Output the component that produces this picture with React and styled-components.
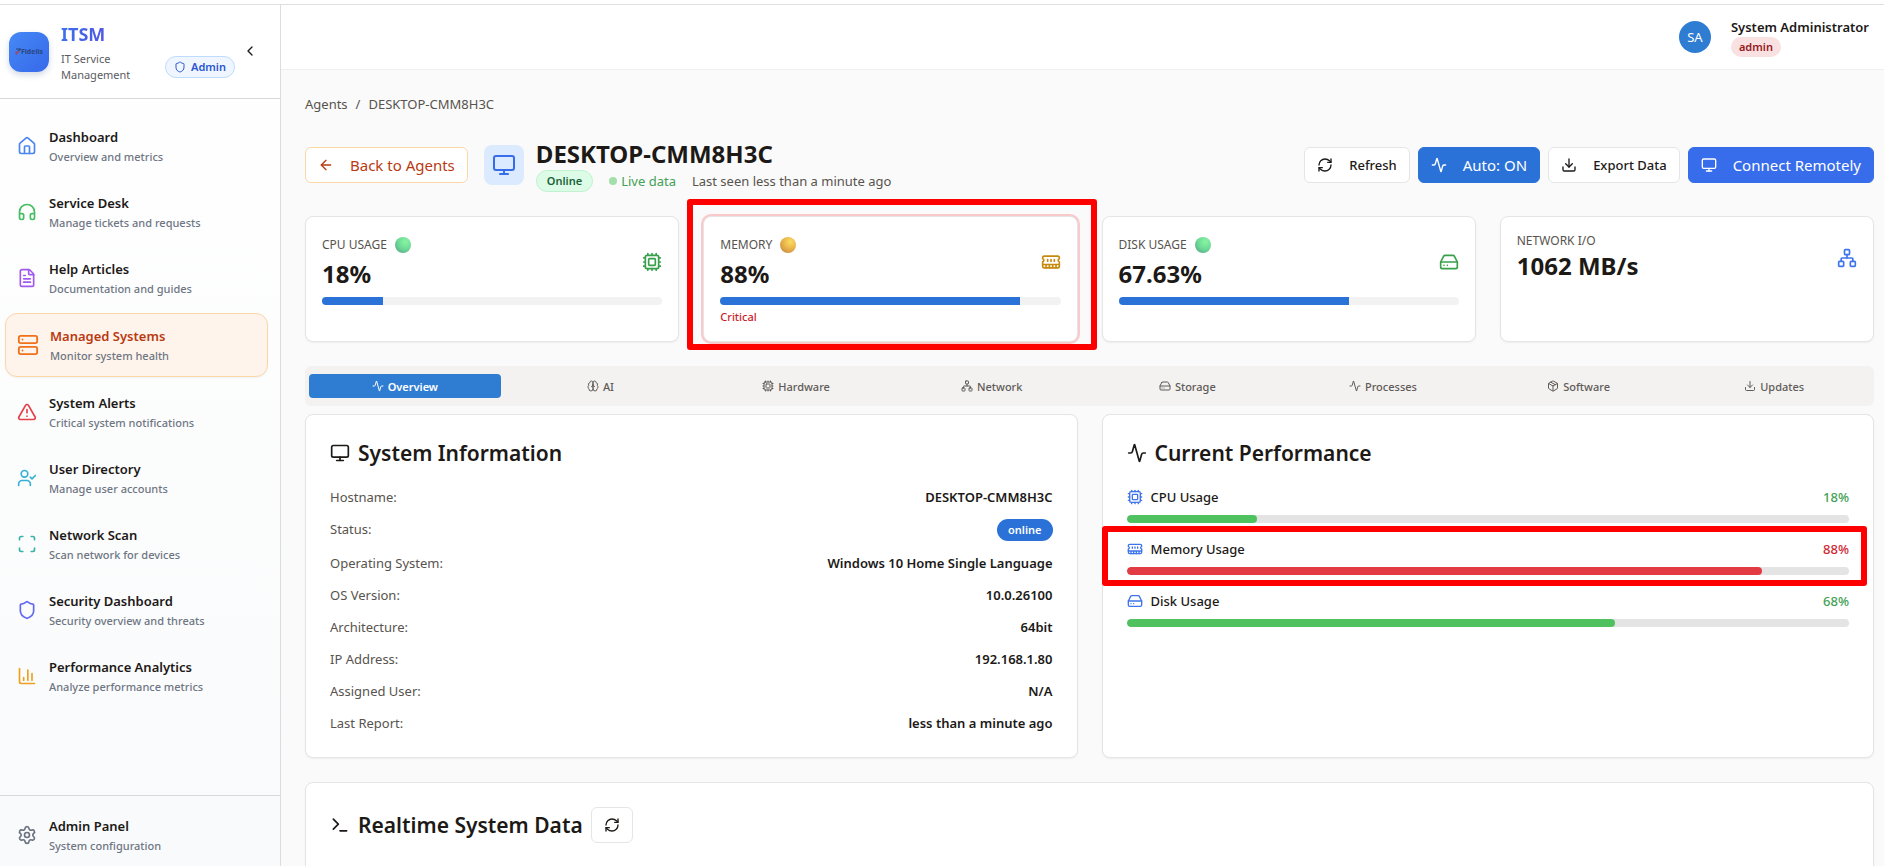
import React from "react";
import styled, { createGlobalStyle, css } from "styled-components";
import {
  House, Headphones, FileText, Server, TriangleAlert, UserCheck, Scan, Shield,
  ChartColumn, Settings, ChevronLeft, ArrowLeft, Monitor, RefreshCw, Activity,
  Download, Cpu, HardDrive, Network, Package, Terminal,
} from "lucide-react";

const GlobalStyle = createGlobalStyle`
  *, *::before, *::after { box-sizing: border-box; }
  body {
    margin: 0;
    background: #fff;
    color: #1c1917;
    font-family: "Noto Sans", "Open Sans", sans-serif;
    font-size: 13px;
    line-height: 20px;
  }
  h1, h2, p, dl, dd, ul { margin: 0; padding: 0; }
  button { font-family: inherit; cursor: pointer; }
  a { color: inherit; text-decoration: none; }
  svg { flex: none; display: block; }
`;

const Shell = styled.div`
  height: 100vh;
  padding-top: 4px;
  display: flex;
  overflow: hidden;
`;

/* ---------- sidebar ---------- */

const Sidebar = styled.aside`
  width: 281px;
  flex: none;
  display: flex;
  flex-direction: column;
  border-top: 1px solid #dfdfe2;
  border-right: 1px solid #dcdcde;
  background: linear-gradient(#fff, #f9fafb);
`;

const Brand = styled.div`
  height: 94px;
  flex: none;
  display: flex;
  align-items: center;
  padding: 0 22px 0 9px;
  border-bottom: 1px solid #d9d9dc;
  background: #fff;
`;

const Logo = styled.div`
  width: 40px;
  height: 40px;
  margin: 0 12px 0 0;
  display: flex;
  align-items: center;
  justify-content: center;
  border-radius: 12px;
  background: linear-gradient(135deg, #4689f5, #3668ea);
  box-shadow: 0 3px 6px rgba(30, 60, 120, 0.2);
  color: #28477f;
  font-size: 7px;
  font-weight: 700;
  line-height: 8px;
`;

const BrandText = styled.div`
  width: 104px;
`;

const BrandName = styled.p`
  width: max-content;
  font-size: 18px;
  font-weight: 700;
  line-height: 26px;
  background: linear-gradient(90deg, #3b6fee, #5257e2);
  background-clip: text;
  color: transparent;
`;

const BrandSub = styled.p`
  width: 80px;
  padding-top: 4px;
  font-size: 11px;
  line-height: 16px;
  color: #5b5b5f;
`;

const AdminBadge = styled.span`
  height: 22px;
  width: 70px;
  margin-top: 30px;
  display: inline-flex;
  align-items: center;
  justify-content: center;
  gap: 5px;
  border: 1px solid #bfdbfe;
  border-radius: 11px;
  background: #eff6ff;
  color: #2a57cf;
  font-size: 11px;
  font-weight: 600;
`;

const CollapseButton = styled.button`
  margin: 0 0 2px auto;
  padding: 0;
  border: 0;
  background: none;
  color: #1c1917;
`;

const Nav = styled.nav`
  flex: 1;
  display: flex;
  flex-direction: column;
  gap: 4px;
  padding: 16px 12px 0 5px;
`;

const NavLink = styled.a`
  display: flex;
  align-items: center;
  gap: 12px;
  padding: 12px;
  border-radius: 12px;

  svg { color: ${(p) => p.$color}; }

  ${(p) => p.$active && css`
    border: 1px solid #fbd7a8;
    background: #fff4eb;
    box-shadow: 0 1px 2px rgba(0, 0, 0, 0.05);
    svg { transform: scale(1.1); }
  `}
`;

const NavTitle = styled.span`
  display: block;
  margin-bottom: 2px;
  font-weight: 600;
  color: ${(p) => (p.$active ? "#b83a12" : "#1c1917")};
`;

const NavSub = styled.span`
  display: block;
  font-size: 11px;
  font-weight: 500;
  line-height: 16px;
  color: #6e7683;
`;

const SidebarFooter = styled.div`
  padding: 8px 12px 0 5px;
  border-top: 1px solid #d9d9dc;
  background: #f9fafc;
`;

/* ---------- main column ---------- */

const Main = styled.div`
  flex: 1;
  min-width: 0;
  display: flex;
  flex-direction: column;
  border-top: 1px solid #dfdfe2;
  background: #fafafa;
`;

const TopBar = styled.header`
  height: 65px;
  flex: none;
  display: flex;
  align-items: center;
  justify-content: flex-end;
  gap: 20px;
  padding: 0 15px 0 0;
  border-bottom: 1px solid #efefef;
  background: #fff;
`;

const Avatar = styled.span`
  width: 32px;
  height: 32px;
  margin-bottom: 1px;
  border-radius: 50%;
  background: #2f7dd3;
  color: #fff;
  line-height: 32px;
  text-align: center;
`;

const UserName = styled.p`
  font-weight: 600;
`;

const RoleBadge = styled.span`
  display: block;
  width: max-content;
  padding: 0 8px;
  border-radius: 10px;
  background: #fae1e1;
  color: #95191e;
  font-size: 11px;
  font-weight: 600;
`;

const Content = styled.main`
  display: flex;
  flex-direction: column;
  padding: 24px 10px 0 24px;
`;

const Breadcrumb = styled.nav`
  display: flex;
  gap: 8px;
  color: #57534e;
`;

const AgentHeader = styled.div`
  display: flex;
  align-items: center;
  gap: 16px;
  margin-top: 24px;
`;

const Button = styled.button`
  height: 36px;
  display: inline-flex;
  align-items: center;
  gap: 16px;
  padding: 0 12px;
  border: 1px solid #e5e5e5;
  border-radius: 6px;
  background: #fff;
  color: #1c1917;
  font-size: 13px;
  font-weight: 500;
  white-space: nowrap;

  ${(p) => p.$large && css`
    font-size: 15px;
    font-weight: 400;
  `}
  ${(p) => p.$tone === "back" && css`
    border-color: #fbd7a8;
    color: #b83a12;
  `}
  ${(p) => p.$tone === "primary" && css`
    border-color: #2a72d8;
    background: #2a72d8;
    color: #fff;
  `}
  ${(p) => p.$tone === "connect" && css`
    border-color: #376ceb;
    background: #376ceb;
    color: #fff;
  `}
`;

const AgentIcon = styled.span`
  width: 40px;
  height: 40px;
  display: flex;
  align-items: center;
  justify-content: center;
  border-radius: 8px;
  background: #dbeafe;
  color: #376ceb;
`;

const AgentTitle = styled.div`
  margin-left: -4px;
`;

const HostName = styled.h1`
  font-size: 24px;
  font-weight: 700;
  line-height: 32px;
`;

const StatusLine = styled.div`
  display: flex;
  align-items: center;
  gap: 16px;
  color: #57534e;
`;

const OnlineBadge = styled.span`
  padding: 0 10px;
  border: 1px solid #c1f2cf;
  border-radius: 11px;
  background: #dcfce7;
  color: #206238;
  font-size: 11px;
  font-weight: 600;
`;

const Live = styled.span`
  display: flex;
  align-items: center;
  gap: 4px;
  color: #43a055;

  &::before {
    content: "";
    width: 8px;
    height: 8px;
    border-radius: 50%;
    background: #a3dfab;
  }
`;

const Actions = styled.div`
  display: flex;
  gap: 8px;
  margin-left: auto;
`;

/* ---------- stat cards ---------- */

const StatGrid = styled.div`
  display: grid;
  grid-template-columns: repeat(4, 1fr);
  gap: 24px;
  margin-top: 24px;
`;

const StatCell = styled.div`
  position: relative;
  display: grid;
`;

const cardBase = css`
  border: 1px solid #e5e5e5;
  border-radius: 8px;
  background: #fff;
  box-shadow: 0 1px 2px rgba(0, 0, 0, 0.05);
`;

const StatCard = styled.section`
  ${cardBase}
  min-height: 126px;
  padding: 16px;
  ${(p) => p.$alert && css`box-shadow: 0 0 0 2px #f9c9cc;`}
`;

const StatTop = styled.div`
  display: flex;
  align-items: center;
  justify-content: space-between;
  svg { color: ${(p) => p.$color}; }
`;

const StatLabel = styled.p`
  display: flex;
  align-items: center;
  gap: 8px;
  font-size: 12px;
  line-height: ${(p) => (p.$dot ? "24px" : "16px")};
  font-weight: 400;
  color: #57534e;
`;

const dots = {
  green: "radial-gradient(circle at 65% 30%, #86f5a0, #6fdc97 45%, #4f9d84)",
  amber: "radial-gradient(circle at 65% 30%, #fbdc63, #e9b548 45%, #bf7c43)",
};

const HealthDot = styled.span`
  width: 16px;
  height: 16px;
  border-radius: 50%;
  background: ${(p) => dots[p.$tone]};
`;

const StatValue = styled.p`
  font-size: 24px;
  font-weight: 700;
  line-height: 34px;
`;

const Track = styled.div`
  height: 8px;
  margin-top: ${(p) => p.$gap}px;
  border-radius: 4px;
  background: ${(p) => p.$track};
  overflow: hidden;
`;

const Fill = styled.div`
  height: 100%;
  border-radius: ${(p) => (p.$round ? "4px" : "0")};
  background: ${(p) => p.$color};
`;

const Warning = styled.p`
  margin-top: 4px;
  font-size: 11px;
  font-weight: 500;
  line-height: 16px;
  color: #c81e2c;
`;

const Callout = styled.span`
  position: absolute;
  inset: ${(p) => p.$inset};
  border: 6px solid #fe0000;
  border-radius: 3px;
  pointer-events: none;
`;

/* ---------- tabs ---------- */

const Tabs = styled.div`
  display: grid;
  grid-template-columns: repeat(8, 1fr);
  gap: 4px;
  align-items: center;
  height: 40px;
  margin-top: 24px;
  padding: 0 4px;
  border-radius: 6px;
  background: #f3f2f1;
`;

const Tab = styled.button`
  height: 24px;
  display: flex;
  align-items: center;
  justify-content: center;
  gap: 4px;
  padding: 0;
  border: 0;
  border-radius: 4px;
  background: ${(p) => (p.$active ? "#2f7dd3" : "none")};
  color: ${(p) => (p.$active ? "#fff" : "#5f5b57")};
  font-size: 11px;
  font-weight: ${(p) => (p.$active ? 600 : 500)};
`;

/* ---------- detail panels ---------- */

const Panels = styled.div`
  display: grid;
  grid-template-columns: 1fr 1fr;
  gap: 24px;
  margin: 8px 0 24px;
`;

const Panel = styled.section`
  ${cardBase}
  min-width: 0;
  padding: 24px;
`;

const DataPanel = styled(Panel)`
  min-height: 180px;
`;

const PanelTitle = styled.h2`
  display: flex;
  align-items: center;
  gap: 8px;
  margin-bottom: ${(p) => (p.$flush ? "0" : "20px")};
  font-size: 21px;
  font-weight: 600;
  line-height: 28px;
`;

const InfoList = styled.dl`
  display: flex;
  flex-direction: column;
  gap: 12px;
`;

const InfoRow = styled.div`
  display: flex;
  justify-content: space-between;
  dt { color: #57534e; }
  dd { font-weight: 600; }
`;

const OnlinePill = styled.span`
  display: block;
  padding: 0 11px;
  border-radius: 11px;
  background: #2a72d8;
  color: #fff;
  font-size: 11px;
  font-weight: 600;
  line-height: 22px;
`;

const MeterList = styled.div`
  display: flex;
  flex-direction: column;
  gap: 16px;
`;

const Meter = styled.div`
  position: relative;
`;

const MeterHead = styled.div`
  display: flex;
  align-items: center;
  gap: 8px;
  font-weight: 500;
  svg { color: #3f74ea; }
`;

const MeterValue = styled.span`
  margin-left: auto;
  color: ${(p) => p.$color};
`;

const SquareButton = styled(Button)`
  width: 42px;
  justify-content: center;
  padding: 0;
`;

/* ---------- icons ---------- */

const IconSvg = styled.svg.attrs((p) => ({
  width: p.$size,
  height: p.$size,
  viewBox: "0 0 24 24",
  fill: "none",
  stroke: "currentColor",
  strokeWidth: 2,
  strokeLinecap: "round",
  strokeLinejoin: "round",
}))``;

function MemoryModule({ size }) {
  return (
    <IconSvg $size={size}>
      <path d="M6 19v-3M10 19v-3M14 19v-3M18 19v-3M8 11V9M16 11V9M12 11V9M2 15h20" />
      <path d="M2 7a2 2 0 0 1 2-2h16a2 2 0 0 1 2 2v1.1a2 2 0 0 0 0 3.837V17a2 2 0 0 1-2 2H4a2 2 0 0 1-2-2v-5.1a2 2 0 0 0 0-3.837Z" />
    </IconSvg>
  );
}

function BrainHalves({ size }) {
  return (
    <IconSvg $size={size}>
      <path d="M12 5a3 3 0 1 0-5.997.125 4 4 0 0 0-2.526 5.77 4 4 0 0 0 .556 6.588A4 4 0 1 0 12 18Z" />
      <path d="M12 5a3 3 0 1 1 5.997.125 4 4 0 0 1 2.526 5.77 4 4 0 0 1-.556 6.588A4 4 0 1 1 12 18Z" />
      <path d="M15 13a4.5 4.5 0 0 1-3-4 4.5 4.5 0 0 1-3 4" />
    </IconSvg>
  );
}

const navItems = [
  ["Dashboard", "Overview and metrics", House, "#4a86f3"],
  ["Service Desk", "Manage tickets and requests", Headphones, "#45bd62"],
  ["Help Articles", "Documentation and guides", FileText, "#a259f0"],
  ["Managed Systems", "Monitor system health", Server, "#f0701c"],
  ["System Alerts", "Critical system notifications", TriangleAlert, "#e5404a"],
  ["User Directory", "Manage user accounts", UserCheck, "#36b1d3"],
  ["Network Scan", "Scan network for devices", Scan, "#38b3a5"],
  ["Security Dashboard", "Security overview and threats", Shield, "#6468f0"],
  ["Performance Analytics", "Analyze performance metrics", ChartColumn, "#eda020"],
];

const stats = [
  { label: "CPU USAGE", value: "18%", pct: 18, dot: "green", Icon: Cpu, color: "#38a04a" },
  { label: "MEMORY", value: "88%", pct: 88, dot: "amber", Icon: MemoryModule, color: "#c78a0e", note: "Critical" },
  { label: "DISK USAGE", value: "67.63%", pct: 67.63, dot: "green", Icon: HardDrive, color: "#38a04a" },
  { label: "NETWORK I/O", value: "1062 MB/s", Icon: Network, color: "#3f74ea" },
];

const tabs = [
  ["Overview", Activity], ["AI", BrainHalves], ["Hardware", Cpu], ["Network", Network],
  ["Storage", HardDrive], ["Processes", Activity], ["Software", Package], ["Updates", Download],
];

const info = [
  ["Hostname:", "DESKTOP-CMM8H3C"],
  ["Status:", <OnlinePill key="s">online</OnlinePill>],
  ["Operating System:", "Windows 10 Home Single Language"],
  ["OS Version:", "10.0.26100"],
  ["Architecture:", "64bit"],
  ["IP Address:", "192.168.1.80"],
  ["Assigned User:", "N/A"],
  ["Last Report:", "less than a minute ago"],
];

const meters = [
  { label: "CPU Usage", pct: 18, text: "18%", Icon: Cpu },
  { label: "Memory Usage", pct: 88, text: "88%", Icon: MemoryModule, high: true },
  { label: "Disk Usage", pct: 67.63, text: "68%", Icon: HardDrive },
];

function NavItem({ title, sub, Icon, color, active }) {
  return (
    <NavLink href="#" $active={active} $color={color} aria-current={active ? "page" : undefined}>
      <Icon size={20} />
      <span>
        <NavTitle $active={active}>{title}</NavTitle>
        <NavSub>{sub}</NavSub>
      </span>
    </NavLink>
  );
}

function Bar({ pct, label, color, track, gap, round }) {
  return (
    <Track $track={track} $gap={gap} role="progressbar" aria-label={label} aria-valuenow={pct}>
      <Fill $color={color} $round={round} style={{ width: `${pct}%` }} />
    </Track>
  );
}

export default function App() {
  return (
    <>
      <GlobalStyle />
      <Shell>
        <Sidebar>
          <Brand>
            <Logo>
              <svg width="6" height="7" viewBox="0 0 6 7" fill="none" strokeWidth="1.2">
                <path d="M1 1h4.5L1 6" stroke="#28477f" />
                <path d="M0 4h4M1 6.5L3.5 3" stroke="#b34a63" />
              </svg>
              Fidelis
            </Logo>
            <BrandText>
              <BrandName>ITSM</BrandName>
              <BrandSub>IT Service Management</BrandSub>
            </BrandText>
            <AdminBadge><Shield size={12} />Admin</AdminBadge>
            <CollapseButton aria-label="Collapse sidebar"><ChevronLeft size={16} /></CollapseButton>
          </Brand>
          <Nav>
            {navItems.map(([title, sub, Icon, color]) => (
              <NavItem key={title} {...{ title, sub, Icon, color }} active={title === "Managed Systems"} />
            ))}
          </Nav>
          <SidebarFooter>
            <NavItem title="Admin Panel" sub="System configuration" Icon={Settings} color="#6b7280" />
          </SidebarFooter>
        </Sidebar>

        <Main>
          <TopBar>
            <Avatar>SA</Avatar>
            <div>
              <UserName>System Administrator</UserName>
              <RoleBadge>admin</RoleBadge>
            </div>
          </TopBar>

          <Content>
            <Breadcrumb aria-label="Breadcrumb">
              <a href="#">Agents</a><span>/</span><span>DESKTOP-CMM8H3C</span>
            </Breadcrumb>

            <AgentHeader>
              <Button $large $tone="back"><ArrowLeft size={16} />Back to Agents</Button>
              <AgentIcon><Monitor size={24} /></AgentIcon>
              <AgentTitle>
                <HostName>DESKTOP-CMM8H3C</HostName>
                <StatusLine>
                  <OnlineBadge>Online</OnlineBadge>
                  <Live>Live data</Live>
                  <span>Last seen less than a minute ago</span>
                </StatusLine>
              </AgentTitle>
              <Actions>
                <Button><RefreshCw size={16} />Refresh</Button>
                <Button $large $tone="primary"><Activity size={16} />Auto: ON</Button>
                <Button><Download size={16} />Export Data</Button>
                <Button $large $tone="connect"><Monitor size={16} />Connect Remotely</Button>
              </Actions>
            </AgentHeader>

            <StatGrid>
              {stats.map(({ label, value, pct, dot, Icon, color, note }) => (
                <StatCell key={label}>
                  <StatCard $alert={!!note}>
                    <StatTop $color={color}>
                      <div>
                        <StatLabel $dot={dot}>{label}{dot && <HealthDot $tone={dot} />}</StatLabel>
                        <StatValue>{value}</StatValue>
                      </div>
                      <Icon size={20} />
                    </StatTop>
                    {pct !== undefined && <Bar pct={pct} label={label} color="#2a72d8" track="#f2f2f2" gap={6} />}
                    {note && <Warning>{note}</Warning>}
                  </StatCard>
                  {note && <Callout $inset="-17px -19px -8px -16px" />}
                </StatCell>
              ))}
            </StatGrid>

            <Tabs role="tablist">
              {tabs.map(([name, Icon], i) => (
                <Tab key={name} role="tab" aria-selected={i === 0} $active={i === 0}>
                  <Icon size={12} />{name}
                </Tab>
              ))}
            </Tabs>

            <Panels>
              <Panel>
                <PanelTitle><Monitor size={20} />System Information</PanelTitle>
                <InfoList>
                  {info.map(([term, value]) => (
                    <InfoRow key={term}><dt>{term}</dt><dd>{value}</dd></InfoRow>
                  ))}
                </InfoList>
              </Panel>
              <Panel>
                <PanelTitle><Activity size={20} />Current Performance</PanelTitle>
                <MeterList>
                  {meters.map(({ label, pct, text, Icon, high }) => (
                    <Meter key={label}>
                      <MeterHead>
                        <Icon size={16} />{label}
                        <MeterValue $color={high ? "#d02630" : "#43a055"}>{text}</MeterValue>
                      </MeterHead>
                      <Bar pct={pct} label={label} color={high ? "#e33b43" : "#4fc25f"} track="#e4e4e4" gap={8} round />
                      {high && <Callout $inset="-13px -18px -11px -25px" />}
                    </Meter>
                  ))}
                </MeterList>
              </Panel>
            </Panels>

            <DataPanel>
              <PanelTitle $flush>
                <Terminal size={20} />Realtime System Data
                <SquareButton aria-label="Refresh realtime data"><RefreshCw size={16} /></SquareButton>
              </PanelTitle>
            </DataPanel>
          </Content>
        </Main>
      </Shell>
    </>
  );
}
